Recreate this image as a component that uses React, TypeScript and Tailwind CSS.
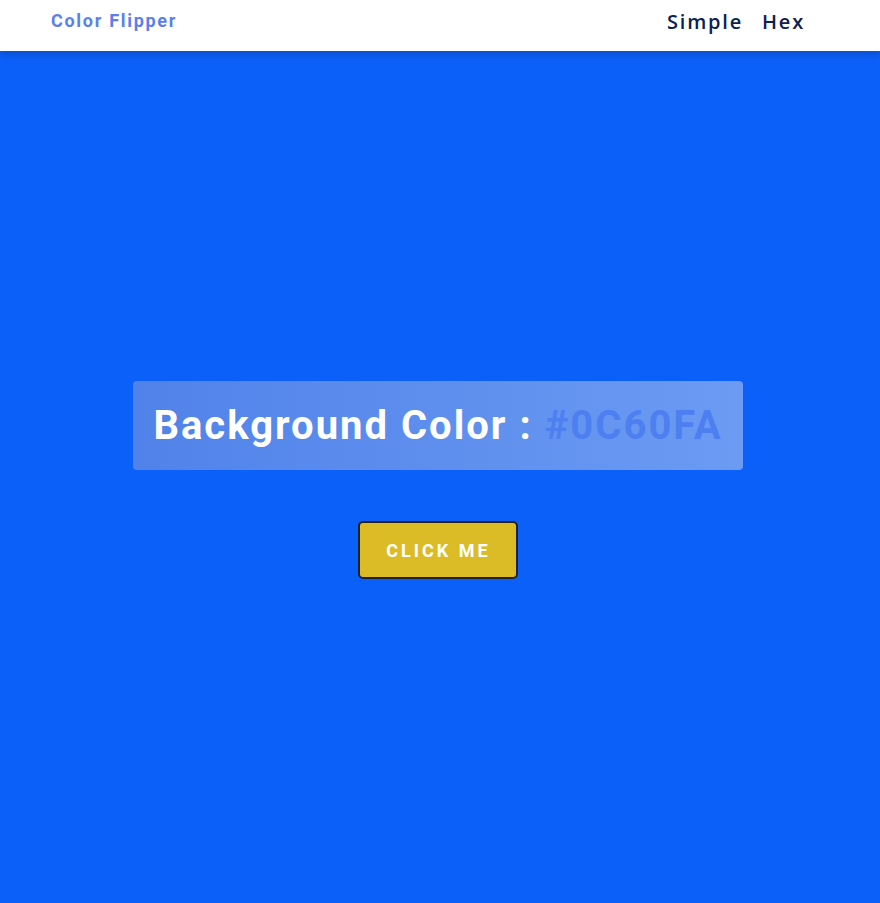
export default function App() {
    const hex = '#0C60FA';

    return (
        <div className="min-h-screen bg-[#0C60FA] flex flex-col" style={{ fontFamily: 'Roboto, sans-serif' }}>
            {/* Navbar */}
            <nav className="h-[51px] bg-white shadow-[0_2px_10px_rgba(0,0,0,0.25)] flex items-center justify-between pl-[51px] pr-[75px] relative z-10">
                <h4 className="font-['Roboto',sans-serif] font-bold text-[18px] tracking-[1.7px] text-[#5a80ea] pb-[10px]">
                    Color Flipper
                </h4>
                <ul className="flex gap-[19px] font-['Open_Sans',sans-serif] font-semibold text-[20px] tracking-[1.8px] text-[#0b2150] pb-[8px]">
                    <li>Simple</li>
                    <li>Hex</li>
                </ul>
            </nav>

            {/* Main */}
            <main className="flex-1 flex flex-col items-center justify-center pt-[6px] pr-[4px]">
                <div className="w-[610px] h-[89px] rounded-[4px] bg-gradient-to-r from-[#5182e9] to-[#6b9bf3] flex items-center justify-center">
                    <h2 className="font-bold text-[40px] tracking-[2px] text-white whitespace-nowrap">
                        Background Color : <span className="text-[#4d7ff0]">{hex}</span>
                    </h2>
                </div>
                <button
                    type="button"
                    className="mt-[51px] w-[160px] h-[58px] rounded-[5px] border-2 border-[#222] bg-[#dbbc26] text-white font-bold text-[18px] tracking-[3px] uppercase pl-[1px]"
                >
                    Click me
                </button>
            </main>
        </div>
    );
}
